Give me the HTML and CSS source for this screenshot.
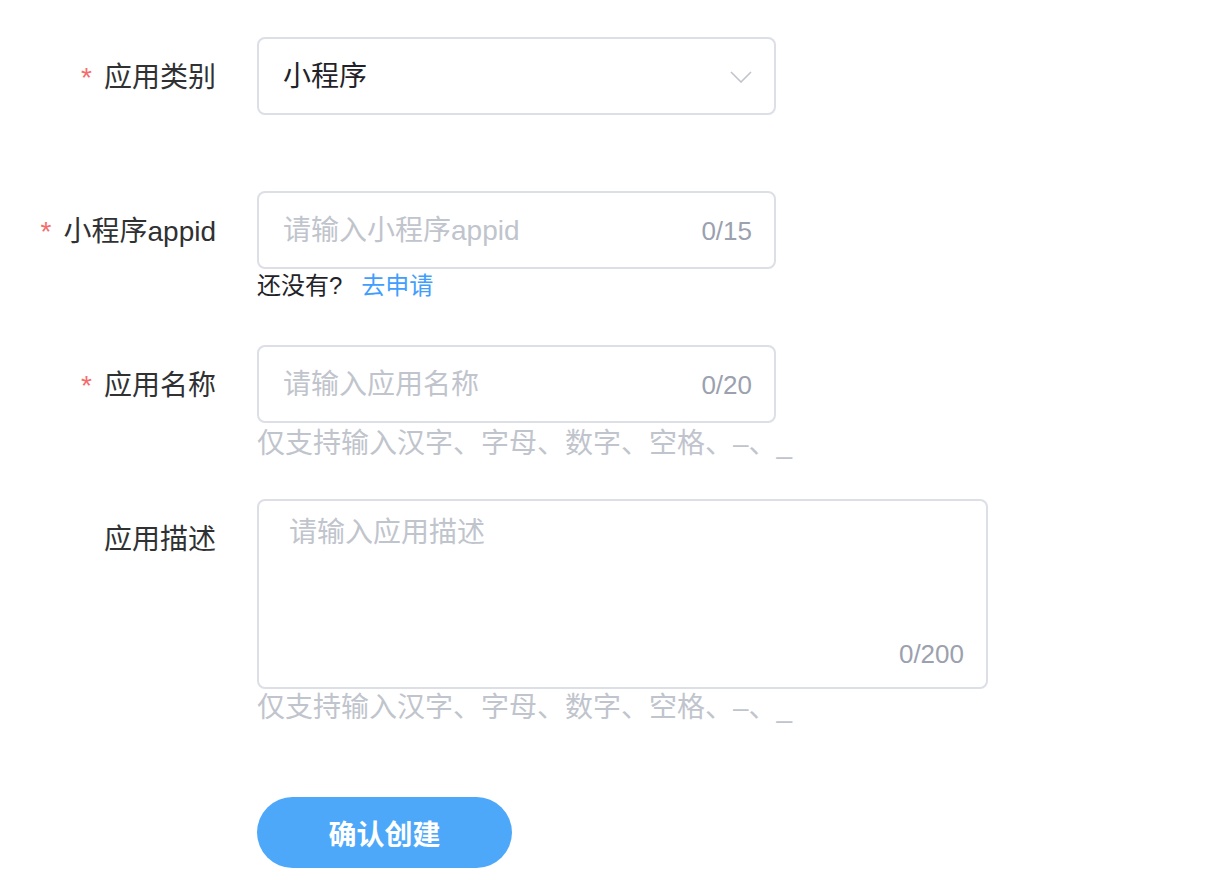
FILE: index.html
```html
<!DOCTYPE html>
<html lang="zh-CN">
<head>
<meta charset="utf-8">
<title>创建应用</title>
<link rel="stylesheet" href="styles.css">
</head>
<body>
<form class="form">
  <div class="item item-type">
    <label class="label required">应用类别</label>
    <div class="control">
      <div class="select">
        <span class="select-value">小程序</span>
        <svg class="chevron" width="22" height="12" viewBox="0 0 22 12"><path d="M1 1 L11 11 L21 1" fill="none" stroke="#c0c4cc" stroke-width="1.6"/></svg>
      </div>
    </div>
  </div>

  <div class="item item-appid">
    <label class="label required">小程序appid</label>
    <div class="control">
      <div class="input">
        <input class="input-inner" type="text" placeholder="请输入小程序appid">
        <span class="count">0/15</span>
      </div>
      <div class="help">还没有?<a class="link" href="#">去申请</a></div>
    </div>
  </div>

  <div class="item item-name">
    <label class="label required">应用名称</label>
    <div class="control">
      <div class="input">
        <input class="input-inner" type="text" placeholder="请输入应用名称">
        <span class="count">0/20</span>
      </div>
      <div class="hint">仅支持输入汉字、字母、数字、空格、–、_</div>
    </div>
  </div>

  <div class="item item-desc">
    <label class="label">应用描述</label>
    <div class="control">
      <div class="textarea">
        <textarea class="textarea-inner" placeholder="请输入应用描述"></textarea>
        <span class="count count-area">0/200</span>
      </div>
      <div class="hint hint-area">仅支持输入汉字、字母、数字、空格、–、_</div>
    </div>
  </div>

  <div class="item item-actions">
    <span class="label"></span>
    <div class="control">
      <button class="btn" type="button">确认创建</button>
    </div>
  </div>
</form>
</body>
</html>
```

FILE: styles.css
```css
* { box-sizing: border-box; }

html, body {
  margin: 0;
  padding: 0;
  background: #ffffff;
}

body {
  font-family: "Liberation Sans", "Noto Sans CJK SC", sans-serif;
  color: #303133;
  font-size: 28px;
}

.form {
  padding-top: 37px;
}

.item {
  display: grid;
  grid-template-columns: 216px auto;
  column-gap: 41px;
  align-items: start;
}

.item-type { margin-bottom: 76px; }
.item-appid { margin-bottom: 42px; }
.item-name { margin-bottom: 34px; }
.item-desc { margin-bottom: 70px; }

.label {
  text-align: right;
  height: 78px;
  line-height: 74px;
  padding-top: 4px;
  font-size: 28px;
  color: #303133;
  white-space: nowrap;
}

.required::before {
  content: "*";
  color: #f56c6c;
  margin-right: 12px;
}

.control {
  display: flex;
  flex-direction: column;
  align-items: flex-start;
}

.select,
.input {
  width: 519px;
  height: 78px;
  border: 2px solid #dcdfe6;
  border-radius: 8px;
  display: flex;
  align-items: center;
  padding: 2px 22px 0 24px;
  background: #fff;
}

.select-value {
  flex: 1;
  color: #1f2329;
  font-size: 28px;
  line-height: 40px;
}

.chevron {
  display: block;
}

.input-inner {
  flex: 1;
  min-width: 0;
  border: 0;
  outline: none;
  padding: 0;
  margin: 0;
  font: inherit;
  font-size: 28px;
  line-height: 40px;
  color: #303133;
  background: transparent;
}

.input-inner::placeholder,
.textarea-inner::placeholder {
  color: #c0c4cc;
  opacity: 1;
}

.count {
  color: #9ba1ae;
  font-size: 26px;
  line-height: 40px;
  margin-left: 12px;
}

.help {
  font-size: 24px;
  line-height: 34px;
  color: #1f2329;
}

.link {
  color: #409eff;
  text-decoration: none;
  margin-left: 19px;
}

.hint {
  font-size: 28px;
  line-height: 42px;
  color: #c0c4cc;
  white-space: nowrap;
}

.hint-area {
  line-height: 38px;
}

.textarea {
  position: relative;
  width: 731px;
  height: 190px;
  border: 2px solid #dcdfe6;
  border-radius: 8px;
  background: #fff;
}

.textarea-inner {
  display: block;
  width: 100%;
  height: 100%;
  border: 0;
  outline: none;
  resize: none;
  padding: 11px 30px;
  margin: 0;
  background: transparent;
  font: inherit;
  font-size: 28px;
  line-height: 42px;
  color: #303133;
  border-radius: 8px;
}

.count-area {
  position: absolute;
  right: 22px;
  bottom: 13px;
  margin: 0;
}

.btn {
  width: 255px;
  height: 71px;
  border: 0;
  border-radius: 36px;
  background: #4ea8fa;
  color: #ffffff;
  font-family: "Liberation Sans", "Noto Sans CJK SC", sans-serif;
  font-size: 28px;
  font-weight: 700;
  cursor: pointer;
  padding: 0;
}
```
